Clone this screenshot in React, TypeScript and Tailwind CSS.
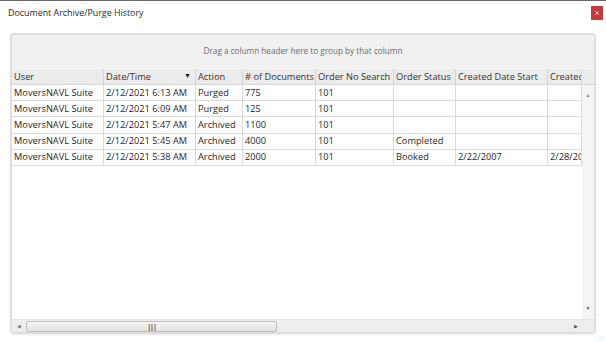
import { X } from "lucide-react";

const columns = [
  { label: "User", w: "w-[92px]" },
  { label: "Date/Time", w: "w-[92px]", sort: true },
  { label: "Action", w: "w-[47px]" },
  { label: "# of Documents", w: "w-[73px]" },
  { label: "Order No Search", w: "w-[78px]" },
  { label: "Order Status", w: "w-[62px]" },
  { label: "Created Date Start", w: "w-[92px]" },
  { label: "Created Date End", w: "w-[34px]" },
];

const rows = [
  ["MoversNAVL Suite", "2/12/2021 6:13 AM", "Purged", "775", "101", "", "", ""],
  ["MoversNAVL Suite", "2/12/2021 6:09 AM", "Purged", "125", "101", "", "", ""],
  ["MoversNAVL Suite", "2/12/2021 5:47 AM", "Archived", "1100", "101", "", "", ""],
  ["MoversNAVL Suite", "2/12/2021 5:45 AM", "Archived", "4000", "101", "Completed", "", ""],
  ["MoversNAVL Suite", "2/12/2021 5:38 AM", "Archived", "2000", "101", "Booked", "2/22/2007", "2/28/2007"],
];

export default function App() {
  return (
    <div
      className="w-[606px] h-[342px] bg-white border-t border-[#6a6a6a] flex flex-col overflow-hidden"
      style={{ fontFamily: '"Open Sans", "Noto Sans", sans-serif' }}
    >
      <div className="h-[32px] flex items-start justify-between pl-2 pr-[3px] pt-[5px]">
        <span className="text-[8.9px] leading-[14px] text-[#2a2a2a]">Document Archive/Purge History</span>
        <button className="w-[12px] h-[14px] bg-[#c7393b] flex items-center justify-center">
          <X className="size-[6px] text-white" strokeWidth={3} />
        </button>
      </div>

      <div className="ml-[10px] w-[586px] h-[301px] rounded-[4px] border-2 border-[#dedede] flex flex-col overflow-hidden shadow-[0_1px_2px_rgba(0,0,0,0.08)]">
        <div className="h-[33px] bg-[#f1f1f1] flex items-center justify-center text-[8.2px] text-[#6b6b6b]">
          Drag a column header here to group by that column
        </div>

        <div className="h-[17px] flex bg-[#ececec] border-t border-[#f8f8f8] border-b border-b-[#d4d4d4]">
          {columns.map((c) => (
            <div
              key={c.label}
              className={`${c.w} shrink-0 flex items-center justify-between pl-[2px] pr-[4px] border-r border-[#d6d6d6] overflow-hidden whitespace-nowrap text-[9.25px] text-[#333]`}
            >
              <span>{c.label}</span>
              {c.sort && <span className="text-[7px] text-[#222]">▼</span>}
            </div>
          ))}
          <div className="flex-1" />
        </div>

        <div className="flex-1 flex min-h-0">
          <div className="w-[570px] bg-white">
            {rows.map((r, i) => (
              <div key={i} className="h-[16.2px] flex border-b border-[#dadada]">
                {r.map((cell, j) => (
                  <div
                    key={j}
                    className={`${columns[j].w} shrink-0 flex items-center pl-[2px] border-r border-[#dadada] overflow-hidden whitespace-nowrap text-[9.25px] text-[#1f1f1f]`}
                  >
                    {cell}
                  </div>
                ))}
              </div>
            ))}
          </div>
          <div className="w-[12px] bg-[#f4f4f4] flex flex-col items-center justify-between py-[8px]">
            <span className="text-[5px] text-[#888] leading-none">▲</span>
            <span className="text-[5px] text-[#555] leading-none">▼</span>
          </div>
        </div>

        <div className="h-[13px] bg-[#eeeeee] flex items-center pl-[5px] pr-[16px] border-t border-[#e4e4e4]">
          <span className="text-[5px] text-[#777] leading-none w-[9px]">◀</span>
          <div className="w-[251px] h-[11px] rounded-[2px] border border-[#bdbdbd] bg-gradient-to-b from-[#f6f6f6] to-[#e2e2e2] flex items-center justify-center">
            <span className="text-[7px] font-bold text-[#444] leading-none tracking-[-1px]">|||</span>
          </div>
          <div className="flex-1" />
          <span className="text-[5px] text-[#555] leading-none">▶</span>
        </div>
      </div>

      <div className="flex justify-end pr-[3px] pt-[1px]">
        <span className="text-[6px] text-[#aaa] leading-none">⋰</span>
      </div>
    </div>
  );
}
